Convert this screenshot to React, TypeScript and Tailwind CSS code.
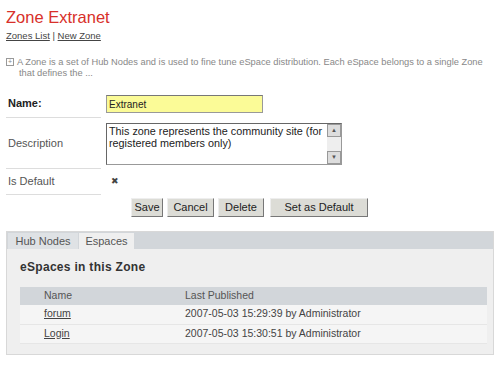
import { useState } from "react";

const rows = [
  { name: "forum", published: "2007-05-03 15:29:39 by Administrator" },
  { name: "Login", published: "2007-05-03 15:30:51 by Administrator" },
];

export default function App() {
  const [tab, setTab] = useState("espaces");

  return (
    <div className="w-[503px] h-[367px] bg-white text-[#333] overflow-hidden" style={{ fontFamily: '"Liberation Sans", Arial, sans-serif' }}>
      <div className="px-[6px] pt-[8px]">
        {/* Header */}
        <h1 className="text-[16.5px] leading-[19px] text-[#d8302a]">Zone Extranet</h1>
        <div className="text-[9.5px] leading-[12px] mt-[3px] text-[#444]">
          <a className="underline">Zones List</a> | <a className="underline">New Zone</a>
        </div>

        {/* Intro */}
        <div className="flex gap-[3px] mt-[15px] text-[9.3px] leading-[11px] text-[#888]">
          <span className="w-[8px] h-[8px] mt-[1px] border border-[#999] text-[7px] leading-[6px] text-center shrink-0">+</span>
          <p>
            A Zone is a set of Hub Nodes and is used to fine tune eSpace distribution. Each eSpace belongs to a single Zone
            <br />
            <span className="pl-[2px]">that defines the ...</span>
          </p>
        </div>

        {/* Form */}
        <div className="mt-[11px] text-[11px]">
          <div className="flex items-center h-[28px]">
            <div className="w-[95px] h-full flex items-center pl-[2px] font-bold text-[#222] border-b border-[#ddd]">Name:</div>
            <input
              className="ml-[5px] w-[157px] h-[18px] px-[2px] bg-[#fbfb97] border border-[#999] border-t-[#777] text-[10px] text-[#222] outline-none"
              defaultValue="Extranet"
            />
          </div>
          <div className="flex items-center h-[51px]">
            <div className="w-[95px] h-full flex items-center pl-[2px] text-[#555] border-b border-[#ddd]">Description</div>
            <div className="ml-[5px] w-[236px] h-[42px] flex border border-[#999] border-t-[#666] border-l-[#666] bg-white">
              <div className="flex-1 px-[2px] pt-[1px] text-[10.8px] leading-[12px] text-[#222]">
                This zone represents the community site (for registered members only)
              </div>
              <div className="w-[14px] flex flex-col justify-between bg-[#eee]">
                <div className="h-[13px] border border-[#999] bg-[#ddd] text-[6px] leading-[11px] text-center text-[#555]">▲</div>
                <div className="h-[13px] border border-[#999] bg-[#ddd] text-[6px] leading-[11px] text-center text-[#555]">▼</div>
              </div>
            </div>
          </div>
          <div className="flex items-center h-[26px]">
            <div className="w-[95px] h-full flex items-center pl-[2px] text-[#555] border-b border-[#ddd]">Is Default</div>
            <span className="ml-[10px] text-[9px] text-[#444]">✖</span>
          </div>
        </div>

        {/* Buttons */}
        <div className="flex gap-[4px] mt-[3px] ml-[125px] text-[11px] text-[#222]">
          <button className="h-[19px] w-[32px] bg-[#dcdcd6] border border-[#eee] border-r-[#777] border-b-[#777]">Save</button>
          <button className="h-[19px] w-[47px] bg-[#dcdcd6] border border-[#eee] border-r-[#777] border-b-[#777]">Cancel</button>
          <button className="h-[19px] w-[46px] bg-[#dcdcd6] border border-[#eee] border-r-[#777] border-b-[#777]">Delete</button>
          <button className="h-[19px] w-[98px] ml-[2px] bg-[#dcdcd6] border border-[#eee] border-r-[#777] border-b-[#777]">
            Set as Default
          </button>
        </div>

        {/* Tabs */}
        <div className="mt-[14px] w-[488px] border border-[#d8d8d8] bg-[#efefef] text-[11px]">
          <div className="flex gap-[1px] pl-[1px] pt-[1px] bg-[#d2d6da]">
            <button
              onClick={() => setTab("hub")}
              className={`h-[16px] w-[70px] ${tab === "hub" ? "bg-[#efefef]" : "bg-[#dfe2e5]"} text-[#555]`}
            >
              Hub Nodes
            </button>
            <button
              onClick={() => setTab("espaces")}
              className={`h-[16px] w-[55px] ${tab === "espaces" ? "bg-[#efefef]" : "bg-[#dfe2e5]"} text-[#555]`}
            >
              Espaces
            </button>
          </div>
          <div className="px-[13px] pt-[9px] pb-[10px]">
            <h2 className="text-[12px] font-bold tracking-[0.3px] text-[#333]">eSpaces in this Zone</h2>
            <table className="w-[467px] mt-[11px] border-collapse text-[10.5px] text-[#555]">
              <thead>
                <tr className="h-[18px] bg-[#d2d6da]">
                  <th className="w-[165px] pl-[24px] text-left font-normal">Name</th>
                  <th className="text-left font-normal">Last Published</th>
                </tr>
              </thead>
              <tbody>
                {rows.map((r) => (
                  <tr key={r.name} className="h-[19px] bg-[#f5f5f5] border-b border-[#e6e6e6]">
                    <td className="pl-[24px]">
                      <a className="underline text-[#444]">{r.name}</a>
                    </td>
                    <td className="text-[#444]">{r.published}</td>
                  </tr>
                ))}
              </tbody>
            </table>
          </div>
        </div>
      </div>
    </div>
  );
}
